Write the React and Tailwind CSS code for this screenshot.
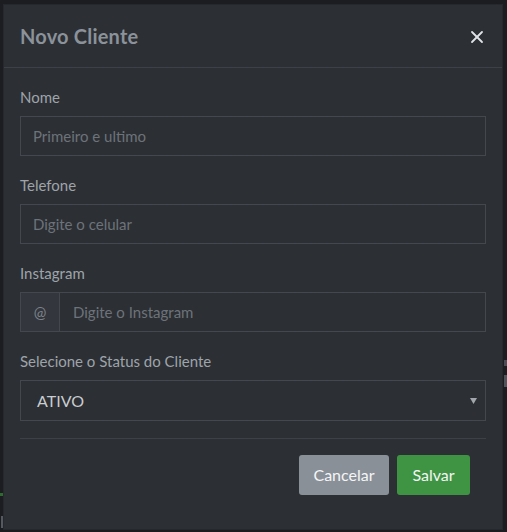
import { X } from "lucide-react";

const Field = ({ label, children }) => (
  <div className="flex flex-col">
    <label className="text-[15px] leading-[20px] text-[#9ea4aa] mb-[9px]">{label}</label>
    {children}
  </div>
);

export default function App() {
  return (
    <div
      className="relative w-[507px] h-[532px] bg-[#1b1d20] overflow-hidden"
      style={{ fontFamily: "Lato, 'Open Sans', sans-serif" }}
    >
      {/* bits of the page behind the modal */}
      <div className="absolute left-0 top-[493px] w-[4px] h-[3px] bg-[#2f6b31]" />
      <div className="absolute left-[1px] top-[516px] w-[2px] h-[12px] bg-[#555a60]" />
      <div className="absolute right-0 top-[360px] w-[3px] h-[6px] bg-[#4a4e54]" />
      <div className="absolute right-0 top-[375px] w-[3px] h-[12px] bg-[#50555b]" />

      <div className="absolute left-[3px] top-[4px] w-[500px] h-[526px] bg-[#2c2f34] border border-[#25282c] flex flex-col">
        {/* Header */}
        <div className="flex items-center justify-between h-[63px] px-[16px] border-b border-[#3d4147]">
          <h2 className="text-[20px] font-bold text-[#8b929a] tracking-[0.2px]">Novo Cliente</h2>
          <button className="text-[#dfe3e7] mr-[-1px] mt-[2px]">
            <X size={20} strokeWidth={2.2} />
          </button>
        </div>

        {/* Body */}
        <div className="flex flex-col gap-[19px] px-[16px] pt-[19px]">
          <Field label="Nome">
            <input
              placeholder="Primeiro e ultimo"
              className="h-[40px] px-[12px] bg-transparent border border-[#44484e] text-[15px] text-[#c8cbce] placeholder:text-[#6d737a] outline-none"
            />
          </Field>
          <Field label="Telefone">
            <input
              placeholder="Digite o celular"
              className="h-[40px] px-[12px] bg-transparent border border-[#44484e] text-[15px] text-[#c8cbce] placeholder:text-[#6d737a] outline-none"
            />
          </Field>
          <Field label="Instagram">
            <div className="flex h-[40px] border border-[#44484e]">
              <span className="w-[39px] flex items-center justify-center bg-[#33363c] border-r border-[#44484e] text-[15px] text-[#7c8289]">
                @
              </span>
              <input
                placeholder="Digite o Instagram"
                className="flex-1 px-[13px] bg-transparent text-[15px] text-[#c8cbce] placeholder:text-[#6d737a] outline-none"
              />
            </div>
          </Field>
          <Field label="Selecione o Status do Cliente">
            <div className="relative flex items-center h-[41px] border border-[#44484e] px-[16px]">
              <span className="text-[16px] text-[#c9ccd0]">ATIVO</span>
              <svg className="absolute right-[8px] top-[17px]" width="7" height="6" viewBox="0 0 7 6">
                <path d="M0 0h7L3.5 6z" fill="#a2a7ad" />
              </svg>
            </div>
          </Field>
        </div>

        {/* Footer */}
        <div className="mx-[16px] mt-[17px] border-t border-[#3d4147] flex justify-end gap-[8px] pt-[16px] pr-[16px]">
          <button className="h-[40px] w-[90px] rounded-[3px] bg-[#8a9098] text-[16px] text-[#f4f5f6]">
            Cancelar
          </button>
          <button className="h-[40px] w-[73px] rounded-[3px] bg-[#3f9444] text-[16px] text-[#f4f5f6]">
            Salvar
          </button>
        </div>
      </div>
    </div>
  );
}
